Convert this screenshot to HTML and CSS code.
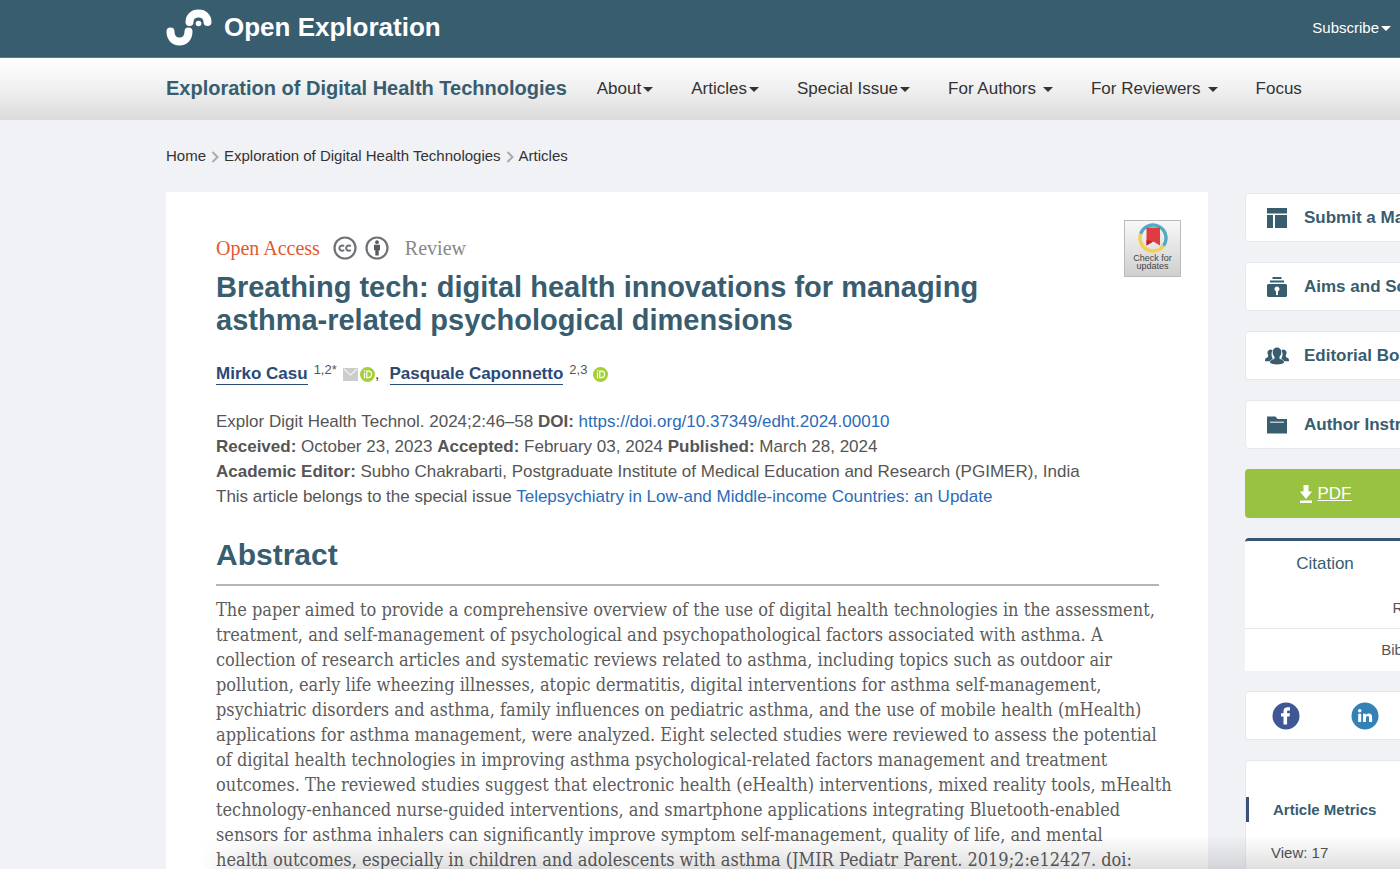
FILE: index.html
```html
<!DOCTYPE html>
<html lang="en">
<head>
<meta charset="utf-8">
<meta name="viewport" content="width=device-width, initial-scale=1">
<title>Breathing tech | Exploration of Digital Health Technologies</title>
<link rel="stylesheet" href="styles.css">
</head>
<body>
<header class="topbar">
  <a class="brand" href="#">
    <svg class="brand-mark" viewBox="0 0 46 38" aria-hidden="true">
      <path d="M4.500 22.500C4.500 28.500 8 32.500 13.500 32.500S22.500 28.500 22.500 22.500" fill="none" stroke="#fff" stroke-width="8" stroke-linecap="round"/>
      <path d="M23.500 13C23.500 8 27 4.500 32.500 4.500S41.500 8 41.500 13" fill="none" stroke="#fff" stroke-width="8" stroke-linecap="round"/>
      <circle cx="32.500" cy="14.500" r="2.800" fill="#fff"/>
    </svg>
    <span>Open Exploration</span>
  </a>
  <button class="subscribe caret" type="button">Subscribe</button>
</header>
<nav class="journal-nav" aria-label="Journal">
  <a class="journal-name" href="#">Exploration of Digital Health Technologies</a>
  <ul class="menu">
    <li><button class="caret" type="button">About</button></li>
    <li><button class="caret" type="button">Articles</button></li>
    <li><button class="caret" type="button">Special Issue</button></li>
    <li><button class="caret spaced" type="button">For Authors</button></li>
    <li><button class="caret spaced" type="button">For Reviewers</button></li>
    <li><a href="#">Focus</a></li>
  </ul>
</nav>
<nav class="breadcrumb" aria-label="Breadcrumb">
  <a href="#">Home</a>
  <svg class="chevron" viewBox="0 0 7 12" aria-hidden="true"><path d="M1 1l5 5-5 5"/></svg>
  <a href="#">Exploration of Digital Health Technologies</a>
  <svg class="chevron" viewBox="0 0 7 12" aria-hidden="true"><path d="M1 1l5 5-5 5"/></svg>
  <a href="#">Articles</a>
</nav>
<div class="page">
  <main class="article">
    <button class="updates" type="button">
      <svg viewBox="0 0 30 30" aria-hidden="true">
        <g fill="none" stroke-width="3.400">
          <path d="M2.640 11A13 13 0 1 1 25.500 22.700" stroke="#54a9c4"/>
          <path d="M2.640 11A13 13 0 0 0 25.500 22.700" stroke="#f3cf52"/>
        </g>
        <path d="M8.500 4.500h13.500v18L15.200 18.500 8.500 22.500z" fill="#e03c40"/>
        <path d="M8.500 17v5.500l6.700-4z" fill="#b5282f"/>
      </svg>
      <span>Check for<br>updates</span>
    </button>
    <div class="kind">
      <span class="open-access">Open Access</span>
      <svg class="cc" viewBox="0 0 24 24" aria-hidden="true">
        <circle cx="12" cy="12" r="10.500" fill="none" stroke="#6c7275" stroke-width="2.200"/>
        <g fill="none" stroke="#6c7275" stroke-width="2"><path d="M11 10.400A2.600 2.600 0 1 0 11 13.800"/><path d="M17.700 10.400A2.600 2.600 0 1 0 17.700 13.800"/></g>
      </svg>
      <svg class="cc" viewBox="0 0 24 24" aria-hidden="true">
        <circle cx="12" cy="12" r="10.500" fill="none" stroke="#6c7275" stroke-width="2.200"/>
        <circle cx="12" cy="6.200" r="1.900" fill="#555c61"/>
        <path d="M9 8.800h6v5.400h-1.300v5.300h-3.400v-5.300H9z" fill="#555c61"/>
      </svg>
      <span class="review">Review</span>
    </div>
    <h1>Breathing tech: digital health innovations for managing<br>asthma-related psychological dimensions</h1>
    <p class="authors">
      <a href="#">Mirko Casu</a> <sup>1,2*</sup>
      <span class="marks">
        <svg class="mail" viewBox="0 0 15 13" aria-hidden="true"><path d="M0 0h15v13H0z" fill="#ccc"/><path d="M1 1l6.500 6L14 1" fill="none" stroke="#eee" stroke-width="1.500"/></svg>
        <svg class="orcid" viewBox="0 0 15 15" aria-hidden="true"><circle cx="7.500" cy="7.500" r="7.500" fill="#a6ce39"/><path d="M4.500 5.500v5.700M6.800 4.200v6.500h1.500a3.200 3.200 0 0 0 0-6.500z" fill="none" stroke="#fff" stroke-width="1.200"/><circle cx="4.500" cy="3.700" r=".8" fill="#fff"/></svg>
      </span>
      <span class="comma">,</span>
      <a href="#">Pasquale Caponnetto</a> <sup>2,3</sup>
      <span class="marks">
        <svg class="orcid" viewBox="0 0 15 15" aria-hidden="true"><circle cx="7.500" cy="7.500" r="7.500" fill="#a6ce39"/><path d="M4.500 5.500v5.700M6.800 4.200v6.500h1.500a3.200 3.200 0 0 0 0-6.500z" fill="none" stroke="#fff" stroke-width="1.200"/><circle cx="4.500" cy="3.700" r=".8" fill="#fff"/></svg>
      </span>
    </p>
    <div class="meta">
      <p>Explor Digit Health Technol. 2024;2:46–58 <b>DOI:</b> <a href="#">https://doi.org/10.37349/edht.2024.00010</a></p>
      <p><b>Received:</b> October 23, 2023 <b>Accepted:</b> February 03, 2024 <b>Published:</b> March 28, 2024</p>
      <p><b>Academic Editor:</b> Subho Chakrabarti, Postgraduate Institute of Medical Education and Research (PGIMER), India</p>
      <p>This article belongs to the special issue <a href="#">Telepsychiatry in Low-and Middle-income Countries: an Update</a></p>
    </div>
    <h2>Abstract</h2>
    <p class="abstract">The paper aimed to provide a comprehensive overview of the use of digital health technologies in the assessment,<br>
      treatment, and self-management of psychological and psychopathological factors associated with asthma. A<br>
      collection of research articles and systematic reviews related to asthma, including topics such as outdoor air<br>
      pollution, early life wheezing illnesses, atopic dermatitis, digital interventions for asthma self-management,<br>
      psychiatric disorders and asthma, family influences on pediatric asthma, and the use of mobile health (mHealth)<br>
      applications for asthma management, were analyzed. Eight selected studies were reviewed to assess the potential<br>
      of digital health technologies in improving asthma psychological-related factors management and treatment<br>
      outcomes. The reviewed studies suggest that electronic health (eHealth) interventions, mixed reality tools, mHealth<br>
      technology-enhanced nurse-guided interventions, and smartphone applications integrating Bluetooth-enabled<br>
      sensors for asthma inhalers can significantly improve symptom self-management, quality of life, and mental<br>
      health outcomes, especially in children and adolescents with asthma (JMIR Pediatr Parent. 2019;2:e12427. doi:</p>
  </main>
  <aside class="sidebar">
    <a class="card link-card" href="#">
      <svg viewBox="0 0 24 24" aria-hidden="true"><path d="M2 2h20v5.500H2zM2 9h6v13H2zM10 9h12v13H10z"/></svg>
      <span>Submit a Manuscript</span>
    </a>
    <a class="card link-card" href="#">
      <svg viewBox="0 0 24 24" aria-hidden="true"><path d="M7.500 2h9v2h-9zM5 5.500h14v2H5zM3 9h18l1 1v11l-1 1H3l-1-1V10z"/><path d="M12 11.500a2.500 2.500 0 0 1 1 4.800V20h-2v-3.700a2.500 2.500 0 0 1 1-4.800z" fill="#fff"/></svg>
      <span>Aims and Scope</span>
    </a>
    <a class="card link-card" href="#">
      <svg viewBox="0 0 24 24" aria-hidden="true"><path d="M5.500 5.500a3.200 3.200 0 0 0-2.500 5c.3 1.900.2 2.500-.8 3-1.600.5-2.200 1-2.200 3.700h5c.4-1.300 1.800-1.800 3-2.200 0 0-1.700-2-1.500-5.300.1-1.500.7-2.600 1-3.200a3 3 0 0 0-2-1zM18.500 5.500a3.200 3.200 0 0 1 2.500 5c-.3 1.900-.2 2.500.8 3 1.600.5 2.200 1 2.200 3.700h-5c-.4-1.300-1.800-1.800-3-2.200 0 0 1.700-2 1.500-5.300-.1-1.500-.7-2.600-1-3.200a3 3 0 0 1 2-1z"/><path d="M12 3.500a4.300 4.300 0 0 0-4.300 4.800c.1 2 .6 3.300 1.900 4.600.1 1.600-.3 2-1.900 2.500-1.500.5-2.700 1.100-2.700 3.400 1.500 1.200 4 1.700 7 1.700s5.500-.5 7-1.700c0-2.300-1.200-2.900-2.700-3.400-1.600-.5-2-.9-1.900-2.500 1.300-1.300 1.800-2.600 1.900-4.600A4.300 4.300 0 0 0 12 3.500z"/></svg>
      <span>Editorial Board</span>
    </a>
    <a class="card link-card" href="#">
      <svg viewBox="0 0 24 24" aria-hidden="true"><path d="M2 3.500h8.500l2 2.500H22v14.500H2z"/><path d="M5 8.500h14v1.500H5z" fill="#b8c8d0"/></svg>
      <span>Author Instructions</span>
    </a>
    <div class="download">
      <a href="#">
        <svg viewBox="0 0 14 18" aria-hidden="true"><path d="M4.500 0h5v6.500H13L7 14 1 6.500h3.500zM1 15.500h12V18H1z"/></svg>
        <span>PDF</span>
      </a>
    </div>
    <section class="citation">
      <button class="tab" type="button">Citation</button>
      <a href="#">RIS</a>
      <a href="#">BibTeX</a>
    </section>
    <div class="card social">
      <a href="#" aria-label="Facebook"><svg viewBox="0 0 28 28" aria-hidden="true"><circle cx="14" cy="14" r="13.500" fill="#3f5794"/><path d="M11.500 22.500v-8H9v-3.300h2.500V9.500c0-3 1.600-4.200 4.100-4.200h2.400v3.200h-1.500c-1.100 0-1.400.5-1.400 1.400v1.300H18l-.4 3.300h-2.500v8z" fill="#fff"/></svg></a>
      <a href="#" aria-label="LinkedIn"><svg viewBox="0 0 28 28" aria-hidden="true"><circle cx="14" cy="14" r="13.500" fill="#3481b6"/><circle cx="8.700" cy="8.800" r="1.800" fill="#fff"/><path d="M7.200 11.800h3V20h-3zM12 11.800h2.900v1.300c.6-1 1.600-1.600 2.900-1.600 2.400 0 3.300 1.500 3.300 4V20h-3v-4c0-1.200-.3-2-1.400-2s-1.700.8-1.700 2v4h-3z" fill="#fff"/></svg></a>
    </div>
    <section class="card metrics">
      <h3>Article Metrics</h3>
      <p>View: 17</p>
    </section>
  </aside>
</div>
<div class="bottom-shade"></div>
</body>
</html>
```
FILE: styles.css
```css
* { box-sizing: border-box; }

:root {
  --teal: #385d6f;
  --gutter: 166px;
  --ink: #333;
}

html { overflow: hidden; height: 100%; }

body {
  margin: 0;
  height: 100%;
  overflow: hidden;
  background: #f0f2f6;
  color: #555;
  font-family: "Liberation Sans", Arial, sans-serif;
  font-size: 17px;
}

h1, h2, h3, p, ul { margin: 0; padding: 0; }
a { color: inherit; text-decoration: none; }

button {
  padding: 0;
  border: 0;
  background: none;
  color: inherit;
  font: inherit;
  cursor: pointer;
}

.topbar {
  display: flex;
  align-items: center;
  justify-content: space-between;
  height: 58px;
  padding: 0 9px 2px var(--gutter);
  background: var(--teal);
  border-bottom: 1px solid #5f7782;
  color: #fff;
}

.brand {
  display: flex;
  align-items: center;
  gap: 12px;
  font-size: 26px;
  font-weight: bold;
}

.brand-mark { width: 46px; height: 38px; }
.subscribe { font-size: 15px; }

.caret { display: inline-flex; align-items: center; gap: 2px; white-space: nowrap; }
.caret.spaced { gap: 7px; }
.caret::after {
  content: "";
  margin-top: 2px;
  border: 5px solid transparent;
  border-top-color: currentColor;
  border-bottom: 0;
}

.journal-nav {
  display: flex;
  align-items: center;
  height: 62px;
  padding-left: var(--gutter);
  background: linear-gradient(#fff, #f0f0f0 50%, #dcdcdc);
  border-bottom: 1px solid #d8dbdc;
  color: var(--ink);
}

.journal-name {
  color: var(--teal);
  font-size: 20px;
  font-weight: bold;
  white-space: nowrap;
}

.menu { display: flex; gap: 38px; margin-left: 30px; list-style: none; }

.breadcrumb {
  display: flex;
  align-items: center;
  gap: 5px;
  padding: 27px 0 28px var(--gutter);
  color: var(--ink);
  font-size: 15px;
  line-height: 17px;
}

.chevron { width: 8px; height: 12px; margin-top: 2px; fill: none; stroke: #aaa; stroke-width: 2; }

.page {
  display: grid;
  grid-template-columns: minmax(0, 1fr) 320px;
  gap: 37px;
  align-items: start;
  margin-right: -165px;
  padding-left: var(--gutter);
}

.article {
  position: relative;
  padding: 44px 49px 44px 50px;
  background: #fff;
}

.updates {
  position: absolute;
  top: 28px;
  right: 27px;
  display: flex;
  flex-direction: column;
  align-items: center;
  gap: 1px;
  width: 57px;
  height: 57px;
  padding: 2px 0;
  border: 1px solid #bbb;
  background: linear-gradient(#f8f8f8, #cfcfcf);
  color: #444;
  font-size: 9px;
  line-height: 8px;
}

.updates svg { width: 30px; height: 30px; flex: none; }

.kind {
  display: flex;
  align-items: center;
  gap: 8px;
  height: 24px;
  font-family: "Liberation Serif", "Times New Roman", serif;
  font-size: 20px;
}

.cc { width: 24px; height: 24px; }
.open-access { margin-right: 5px; color: #e2582e; }
.review { margin-left: 8px; color: #888; }

h1 {
  margin-top: 11px;
  color: var(--teal);
  font-size: 29px;
  line-height: 33px;
}

.authors { display: flex; align-items: center; margin-top: 26px; height: 22px; }
.authors a {
  color: #2b4a75;
  font-weight: bold;
  line-height: 20px;
  border-bottom: 1px solid #2b4a75;
}
.authors sup { align-self: flex-start; margin: 0 6px; font-size: 13px; line-height: 13px; }
.marks { display: flex; align-items: center; gap: 2px; }
.mail { width: 15px; height: 13px; }
.orcid { width: 15px; height: 15px; }
.comma { margin-right: 10px; }

.meta { margin-top: 24px; line-height: 25px; }
.meta a { color: #2a6cb8; }

h2 {
  margin: 26px 0 11px;
  padding-bottom: 9px;
  border-bottom: 2px solid #b5b5b5;
  color: var(--teal);
  font-size: 30px;
  line-height: 40px;
}

.abstract {
  color: #5c5c5c;
  font-family: "DejaVu Serif Condensed", "DejaVu Serif", serif;
  font-size: 18px;
  line-height: 25px;
  white-space: nowrap;
}

.sidebar { display: flex; flex-direction: column; gap: 20px; padding-top: 1px; }

.card { background: #fff; border: 1px solid #e6e9ec; border-radius: 4px; }

.link-card {
  display: flex;
  align-items: center;
  gap: 15px;
  height: 49px;
  padding-left: 19px;
  color: var(--teal);
  font-weight: bold;
}

.link-card svg { width: 24px; height: 24px; fill: currentColor; }

.download {
  display: flex;
  height: 49px;
  border-radius: 4px;
  background: #98c23f;
  color: #fff;
}

.download a { display: flex; flex: 0 0 50%; align-items: center; justify-content: center; gap: 5px; }
.download svg { width: 14px; height: 18px; fill: currentColor; }
.download span { text-decoration: underline; }

.citation { display: flex; flex-direction: column; background: #fff; font-size: 15px; text-align: center; }
.citation .tab {
  width: 50%;
  height: 49px;
  border-top: 3px solid #36566f;
  border-radius: 4px;
  color: var(--teal);
  font-size: 17px;
}
.citation a { padding: 12px 0; line-height: 17px; }
.citation a + a { padding-bottom: 13px; border-top: 1px solid #e6e9ec; }

.social { display: flex; height: 49px; align-items: center; }
.social a { display: flex; flex: 0 0 25%; justify-content: center; }
.social svg { width: 28px; height: 28px; }

.metrics { padding: 36px 0; font-size: 15px; }
.metrics h3 {
  padding-left: 24px;
  border-left: 3px solid #3d5078;
  color: var(--teal);
  font-size: 15px;
  line-height: 25px;
}
.metrics p { margin: 22px 0 0 25px; line-height: 17px; }

.bottom-shade {
  position: fixed;
  right: 0;
  bottom: 0;
  left: 200px;
  height: 34px;
  background: linear-gradient(transparent, rgba(0, 0, 0, .12));
  -webkit-mask-image: linear-gradient(90deg, transparent, #000 60px);
  mask-image: linear-gradient(90deg, transparent, #000 60px);
  pointer-events: none;
}
```
